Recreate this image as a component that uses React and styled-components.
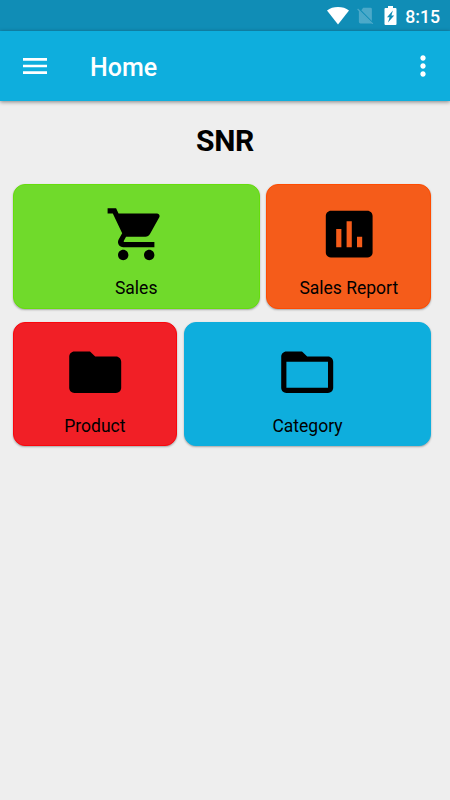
import styled, { createGlobalStyle } from "styled-components"

const tiles = [
    [
        { label: "Sales", color: "#70da2b", edge: "#66dd0c", width: 247, Icon: CartIcon },
        { label: "Sales Report", color: "#f55c1a", edge: "#ff4b00", width: 165, Icon: ReportIcon },
    ],
    [
        { label: "Product", color: "#f11f26", edge: "#fa060c", width: 164.4, Icon: FolderIcon },
        { label: "Category", color: "#0eaedd", edge: "#0eaedd", width: 247.6, Icon: FolderOpenIcon },
    ],
]

export default function App() {
    return (
        <Screen>
            <GlobalStyle />
            <StatusBar>
                <WifiIcon />
                <NoSimIcon />
                <BatteryIcon />
                <Clock>8:15</Clock>
            </StatusBar>
            <AppBar>
                <IconButton aria-label="Open menu">
                    <MenuIcon />
                </IconButton>
                <PageTitle>Home</PageTitle>
                <IconButton aria-label="More options">
                    <MoreIcon />
                </IconButton>
            </AppBar>
            <Main>
                <Heading>SNR</Heading>
                <Tiles>
                    {tiles.map((row, i) => (
                        <TileRow key={i}>
                            {row.map(({ label, color, edge, width, Icon }) => (
                                <Tile key={label} $color={color} $edge={edge} $width={width}>
                                    <Icon />
                                    <TileLabel>{label}</TileLabel>
                                </Tile>
                            ))}
                        </TileRow>
                    ))}
                </Tiles>
            </Main>
        </Screen>
    )
}

function WifiIcon() {
    return (
        <svg width="22" height="18" viewBox="0 0 22 18" fill="#fff">
            <path d="M11 17.4 0 3.4C3 1.2 6.800 0 11 0s8 1.200 11 3.400z" />
        </svg>
    )
}

function NoSimIcon() {
    return (
        <svg width="17" height="17" viewBox="0 0 17 17" fill="#4ba9c9">
            <path d="M6.200.8h7.300q1.400 0 1.400 1.400V14.100L4.300 3.300z" />
            <path d="M1.900 3.200 14.700 15.900Q14.200 16.400 13.500 16.400H3.300Q1.900 16.400 1.900 15z" />
            <path d="M.6 2 15.800 16.900" stroke="#4ba9c9" strokeWidth="1.2" />
        </svg>
    )
}

function BatteryIcon() {
    return (
        <svg width="13" height="19" viewBox="0 0 13 19">
            <path d="M4 0h5v2h2.500q1 0 1 1v15q0 1-1 1h-10q-1 0-1-1V3q0-1 1-1H4z" fill="#fff" />
            <path d="M8.900 4.600 3 11.200h2.600L4 16.400l6.200-6.900H7.400z" fill="#108db6" />
        </svg>
    )
}

function MenuIcon() {
    return (
        <svg width="32" height="32" viewBox="0 0 24 24" fill="#fff">
            <path d="M3 18h18v-2H3v2zm0-5h18v-2H3v2zm0-7v2h18V6H3z" />
        </svg>
    )
}

function MoreIcon() {
    return (
        <svg width="32" height="32" viewBox="0 0 24 24" fill="#fff">
            <path d="M12 8c1.100 0 2-.9 2-2s-.9-2-2-2-2 .9-2 2 .9 2 2 2zm0 2c-1.100 0-2 .9-2 2s.9 2 2 2 2-.9 2-2-.9-2-2-2zm0 6c-1.100 0-2 .9-2 2s.9 2 2 2 2-.9 2-2-.9-2-2-2z" />
        </svg>
    )
}

function CartIcon() {
    return (
        <TileIcon viewBox="0 0 24 24">
            <path d="M7 18c-1.100 0-1.990.9-1.990 2S5.900 22 7 22s2-.9 2-2-.9-2-2-2zM1 2v2h2l3.600 7.590-1.350 2.450c-.16.28-.25.61-.25.96 0 1.100.9 2 2 2h12v-2H7.420c-.14 0-.25-.11-.25-.25l.03-.12.9-1.630h7.450c.75 0 1.410-.41 1.750-1.030l3.580-6.490c.08-.14.12-.31.12-.48 0-.55-.45-1-1-1H5.210l-.94-2H1zm16 16c-1.100 0-1.990.9-1.990 2s.89 2 1.990 2 2-.9 2-2-.9-2-2-2z" />
        </TileIcon>
    )
}

function ReportIcon() {
    return (
        <TileIcon viewBox="0 0 24 24">
            <path d="M19 3H5c-1.100 0-2 .9-2 2v14c0 1.100.9 2 2 2h14c1.100 0 2-.9 2-2V5c0-1.100-.9-2-2-2zM9 17H7v-7h2v7zm4 0h-2V7h2v10zm4 0h-2v-4h2v4z" />
        </TileIcon>
    )
}

function FolderIcon() {
    return (
        <TileIcon viewBox="0 0 24 24">
            <path d="M10 4H4c-1.100 0-1.990.9-1.990 2L2 18c0 1.100.9 2 2 2h16c1.100 0 2-.9 2-2V8c0-1.100-.9-2-2-2h-8l-2-2z" />
        </TileIcon>
    )
}

function FolderOpenIcon() {
    return (
        <TileIcon viewBox="0 0 24 24">
            <path d="M20 6h-8l-2-2H4c-1.100 0-1.990.9-1.990 2L2 18c0 1.100.9 2 2 2h16c1.100 0 2-.9 2-2V8c0-1.100-.9-2-2-2zm0 12H4V8h16v10z" />
        </TileIcon>
    )
}

const GlobalStyle = createGlobalStyle`
* {
    box-sizing: border-box;
}
body {
    margin: 0;
    background: #eee;
    font-family: Roboto, "Liberation Sans", sans-serif;
}
`

const Screen = styled.div`
display: flex;
flex-direction: column;
width: 100%;
min-height: 100vh;
background: #eee;
`

const StatusBar = styled.div`
display: flex;
align-items: center;
justify-content: flex-end;
height: 31px;
padding-right: 10px;
background: #108db6;
svg {
    flex: none;
    margin-right: 8px;
}
svg:nth-of-type(2) {
    margin-right: 10px;
}
`

const Clock = styled.span`
color: #fff;
font-size: 17.700px;
font-weight: 500;
line-height: 30px;
padding-top: 2px;
`

const AppBar = styled.header`
display: flex;
align-items: center;
height: 70px;
padding: 0 11.500px 0 19px;
background: #0eaedd;
box-shadow: 0 1px 4px rgba(0, 0, 0, 0.45);
`

const IconButton = styled.button`
display: flex;
padding: 0;
border: 0;
background: none;
cursor: pointer;
`

const PageTitle = styled.h1`
flex: 1;
margin: 4px 0 0 39px;
color: #fff;
font-size: 25px;
font-weight: 500;
line-height: 32px;
`

const Main = styled.main`
padding: 20px 12.700px;
`

const Heading = styled.h2`
margin: 0;
color: #000;
font-size: 30px;
font-weight: 700;
letter-spacing: -0.3px;
line-height: 39px;
text-align: center;
`

const Tiles = styled.div`
display: flex;
flex-direction: column;
gap: 13.200px;
margin-top: 24px;
`

const TileRow = styled.div`
display: flex;
gap: 6.600px;
`

const Tile = styled.div`
display: flex;
flex-direction: column;
align-items: center;
width: ${(props) => props.$width}px;
height: 124.600px;
padding-top: 17.800px;
border: 1px solid ${(props) => props.$edge};
border-radius: 12px;
background: ${(props) => props.$color};
box-shadow: 0 1px 2px rgba(0, 0, 0, 0.3);
cursor: pointer;
`

const TileIcon = styled.svg`
width: 62.400px;
height: 62.400px;
fill: #000;
`

const TileLabel = styled.span`
margin-top: 11px;
color: #000;
font-size: 17.500px;
line-height: 24px;
`
